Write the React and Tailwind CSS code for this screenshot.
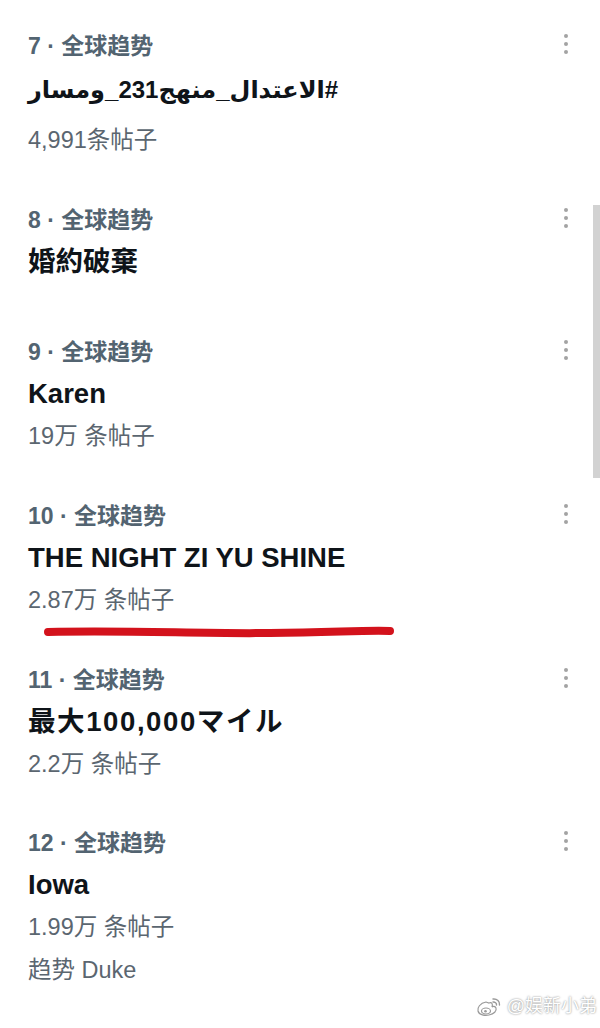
import React from 'react';

const trends = [
  { rank: 7, title: '#الاعتدال_منهج231_ومسار', rtl: true, count: '4,991条帖子' },
  { rank: 8, title: '婚約破棄' },
  { rank: 9, title: 'Karen', count: '19万 条帖子' },
  { rank: 10, title: 'THE NIGHT ZI YU SHINE', count: '2.87万 条帖子', marked: true },
  { rank: 11, title: '最大100,000マイル', count: '2.2万 条帖子', wide: true },
  { rank: 12, title: 'Iowa', count: '1.99万 条帖子', extra: '趋势 Duke' },
];

const font = { fontFamily: '"Liberation Sans", "Noto Sans CJK SC", "DejaVu Sans", sans-serif' };

const MoreDots = () => (
  <svg width="8" height="22" viewBox="0 0 8 22" className="block">
    <circle cx="4" cy="3" r="2" fill="#a3a3a3" />
    <circle cx="4" cy="11" r="2" fill="#a3a3a3" />
    <circle cx="4" cy="19" r="2" fill="#a3a3a3" />
  </svg>
);

const RedMark = () => (
  <svg width="360" height="16" viewBox="0 0 360 16" className="absolute left-[40px] bottom-[19px]">
    <path d="M8 8 C 90 6, 160 10, 230 9 S 330 6, 350 7" stroke="#d3121c" strokeWidth="8" strokeLinecap="round" fill="none" />
  </svg>
);

const WeiboLogo = () => (
  <svg width="26" height="22" viewBox="0 0 26 22">
    <path d="M10 6 C 4 7, 1 12, 2 15 C 3 19, 9 20, 13 19 C 18 18, 21 15, 20 12 C 19 10, 17 10, 16 11 C 17 8, 16 6, 13 7 Z" fill="#fff" stroke="#9a9a9a" strokeWidth="1.2" />
    <ellipse cx="10" cy="15" rx="4.5" ry="3" fill="none" stroke="#9a9a9a" strokeWidth="1.2" />
    <circle cx="9.5" cy="15.3" r="1.3" fill="#9a9a9a" />
    <path d="M17 3 C 21 2.5, 24 5.5, 23.5 9" stroke="#9a9a9a" strokeWidth="1.4" fill="none" strokeLinecap="round" />
    <path d="M17 6 C 19 5.8, 20.8 7.3, 20.5 9" stroke="#9a9a9a" strokeWidth="1.4" fill="none" strokeLinecap="round" />
  </svg>
);

const TrendItem = ({ item, className }) => (
  <div className={`relative px-[28px] ${className}`}>
    <div className="flex items-center justify-between h-[42px]">
      <span className="text-[23px] font-bold text-[#536471]">
        {item.rank} · 全球趋势
      </span>
      <span className="mr-[-8px] mt-[-4px]">
        <MoreDots />
      </span>
    </div>
    {item.rtl ? (
      <div className="h-[46px] leading-[46px] text-[24px] font-bold text-[#0f1419] text-left">
        <span dir="rtl">{item.title}</span>
      </div>
    ) : (
      <div className={`h-[42px] leading-[42px] text-[27.5px] font-bold text-[#0f1419] ${item.wide ? 'tracking-[1.6px]' : ''}`}>
        {item.title}
      </div>
    )}
    {item.count && (
      <div className={`h-[42px] leading-[42px] text-[23.5px] text-[#5b6670] ${item.rtl ? 'mt-[6px]' : ''}`}>
        {item.count}
      </div>
    )}
    {item.extra && (
      <div className="h-[42px] leading-[44px] text-[23.5px] text-[#5b6670]">{item.extra}</div>
    )}
    {item.marked && <RedMark />}
  </div>
);

export default function App() {
  return (
    <div className="relative w-[600px] h-[1028px] bg-white overflow-hidden" style={font}>
      <div className="flex flex-col pt-[25px] pr-[10px]">
        <TrendItem item={trends[0]} className="pb-[38px]" />
        <TrendItem item={trends[1]} className="pb-[48px]" />
        <TrendItem item={trends[2]} className="pb-[38px]" />
        <TrendItem item={trends[3]} className="pb-[38px]" />
        <TrendItem item={trends[4]} className="pb-[37px]" />
        <TrendItem item={trends[5]} />
      </div>

      {/* scrollbar */}
      <div className="absolute right-0 top-[205px] w-[7px] h-[273px] bg-[#d2d2d2]" />

      {/* watermark */}
      <div className="absolute right-[3px] bottom-[8px] flex items-center gap-[5px]">
        <WeiboLogo />
        <span className="text-[18px] text-white [text-shadow:0_0_2px_rgba(0,0,0,0.55)]">@娱新小弟</span>
      </div>
    </div>
  );
}
